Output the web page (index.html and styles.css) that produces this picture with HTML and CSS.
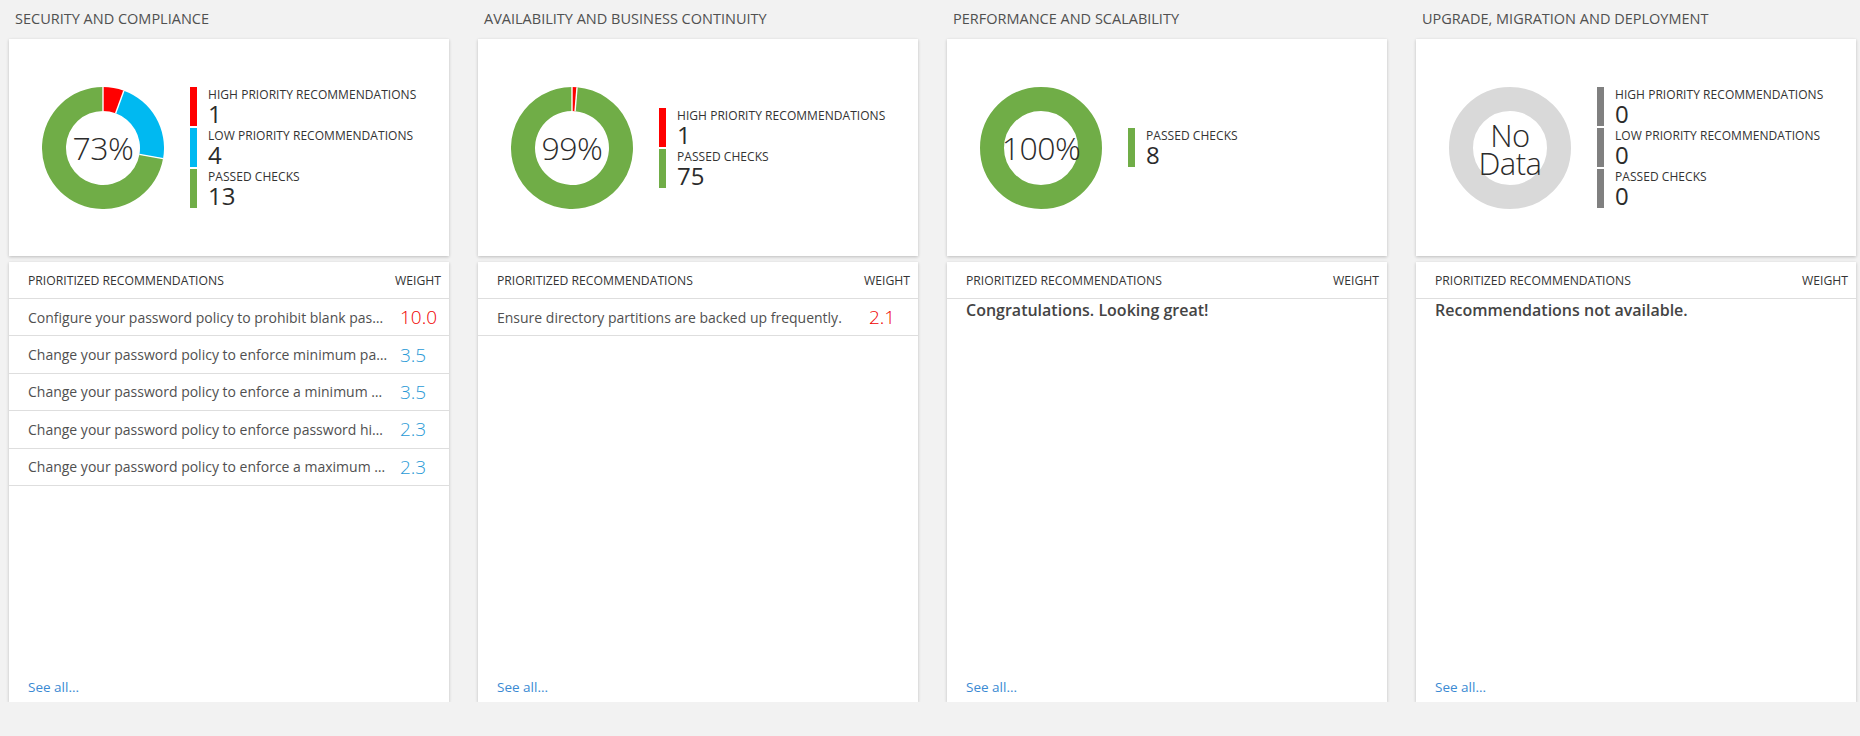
FILE: index.html
```html
<!DOCTYPE html>
<html lang="en">
<head>
<meta charset="utf-8">
<title>Assessment</title>
<link rel="stylesheet" href="styles.css">
</head>
<body>
<div class="board">

  <section class="col">
    <h2 class="col-title">SECURITY AND COMPLIANCE</h2>
    <div class="card summary">
      <div class="donut">
        <svg viewBox="0 0 122 122" width="122" height="122">
          <path class="seg-red" d="M61,0 A61,61 0 0 1 81.863,3.679 L73.655,26.231 A37,37 0 0 0 61,24 Z"/>
          <path class="seg-blue" d="M81.863,3.679 A61,61 0 0 1 121.073,71.593 L97.438,67.425 A37,37 0 0 0 73.655,26.231 Z"/>
          <path class="seg-green" d="M121.073,71.593 A61,61 0 1 1 61,0 L61,24 A37,37 0 1 0 97.438,67.425 Z"/>
          <line class="sep" x1="61" y1="0" x2="61" y2="24"/>
          <line class="sep" x1="81.863" y1="3.679" x2="73.655" y2="26.231"/>
          <line class="sep" x1="121.073" y1="71.593" x2="97.438" y2="67.425"/>
        </svg>
        <div class="donut-label">73%</div>
      </div>
      <ul class="legend">
        <li class="leg"><span class="bar red"></span><div class="leg-text"><div class="leg-label">HIGH PRIORITY RECOMMENDATIONS</div><div class="leg-num">1</div></div></li>
        <li class="leg"><span class="bar blue"></span><div class="leg-text"><div class="leg-label">LOW PRIORITY RECOMMENDATIONS</div><div class="leg-num">4</div></div></li>
        <li class="leg"><span class="bar green"></span><div class="leg-text"><div class="leg-label">PASSED CHECKS</div><div class="leg-num">13</div></div></li>
      </ul>
    </div>
    <div class="card recs">
      <div class="recs-head"><span class="h-name">PRIORITIZED RECOMMENDATIONS</span><span class="h-weight">WEIGHT</span></div>
      <ul class="rows">
        <li class="row"><span class="r-name">Configure your password policy to prohibit blank pas…</span><span class="r-weight hi">10.0</span></li>
        <li class="row"><span class="r-name">Change your password policy to enforce minimum pa…</span><span class="r-weight lo">3.5</span></li>
        <li class="row"><span class="r-name">Change your password policy to enforce a minimum …</span><span class="r-weight lo">3.5</span></li>
        <li class="row"><span class="r-name">Change your password policy to enforce password hi…</span><span class="r-weight lo">2.3</span></li>
        <li class="row"><span class="r-name">Change your password policy to enforce a maximum …</span><span class="r-weight lo">2.3</span></li>
      </ul>
      <a class="see-all" href="#">See all...</a>
    </div>
  </section>

  <section class="col">
    <h2 class="col-title">AVAILABILITY AND BUSINESS CONTINUITY</h2>
    <div class="card summary">
      <div class="donut">
        <svg viewBox="0 0 122 122" width="122" height="122">
          <path class="seg-red" d="M61,0 A61,61 0 0 1 66.037,0.209 L64.055,24.127 A37,37 0 0 0 61,24 Z"/>
          <path class="seg-green" d="M66.037,0.209 A61,61 0 1 1 61,0 L61,24 A37,37 0 1 0 64.055,24.127 Z"/>
          <line class="sep" x1="61" y1="0" x2="61" y2="24"/>
          <line class="sep" x1="66.037" y1="0.209" x2="64.055" y2="24.127"/>
        </svg>
        <div class="donut-label">99%</div>
      </div>
      <ul class="legend">
        <li class="leg"><span class="bar red"></span><div class="leg-text"><div class="leg-label">HIGH PRIORITY RECOMMENDATIONS</div><div class="leg-num">1</div></div></li>
        <li class="leg"><span class="bar green"></span><div class="leg-text"><div class="leg-label">PASSED CHECKS</div><div class="leg-num">75</div></div></li>
      </ul>
    </div>
    <div class="card recs">
      <div class="recs-head"><span class="h-name">PRIORITIZED RECOMMENDATIONS</span><span class="h-weight">WEIGHT</span></div>
      <ul class="rows">
        <li class="row"><span class="r-name">Ensure directory partitions are backed up frequently.</span><span class="r-weight hi">2.1</span></li>
      </ul>
      <a class="see-all" href="#">See all...</a>
    </div>
  </section>

  <section class="col">
    <h2 class="col-title">PERFORMANCE AND SCALABILITY</h2>
    <div class="card summary">
      <div class="donut">
        <svg viewBox="0 0 122 122" width="122" height="122">
          <circle class="ring-green" cx="61" cy="61" r="49"/>
        </svg>
        <div class="donut-label">100%</div>
      </div>
      <ul class="legend">
        <li class="leg"><span class="bar green"></span><div class="leg-text"><div class="leg-label">PASSED CHECKS</div><div class="leg-num">8</div></div></li>
      </ul>
    </div>
    <div class="card recs">
      <div class="recs-head"><span class="h-name">PRIORITIZED RECOMMENDATIONS</span><span class="h-weight">WEIGHT</span></div>
      <p class="recs-msg">Congratulations. Looking great!</p>
      <a class="see-all" href="#">See all...</a>
    </div>
  </section>

  <section class="col">
    <h2 class="col-title">UPGRADE, MIGRATION AND DEPLOYMENT</h2>
    <div class="card summary">
      <div class="donut">
        <svg viewBox="0 0 122 122" width="122" height="122">
          <circle class="ring-gray" cx="61" cy="61" r="49"/>
        </svg>
        <div class="donut-label two">No<br>Data</div>
      </div>
      <ul class="legend">
        <li class="leg"><span class="bar gray"></span><div class="leg-text"><div class="leg-label">HIGH PRIORITY RECOMMENDATIONS</div><div class="leg-num">0</div></div></li>
        <li class="leg"><span class="bar gray"></span><div class="leg-text"><div class="leg-label">LOW PRIORITY RECOMMENDATIONS</div><div class="leg-num">0</div></div></li>
        <li class="leg"><span class="bar gray"></span><div class="leg-text"><div class="leg-label">PASSED CHECKS</div><div class="leg-num">0</div></div></li>
      </ul>
    </div>
    <div class="card recs">
      <div class="recs-head"><span class="h-name">PRIORITIZED RECOMMENDATIONS</span><span class="h-weight">WEIGHT</span></div>
      <p class="recs-msg">Recommendations not available.</p>
      <a class="see-all" href="#">See all...</a>
    </div>
  </section>

</div>
</body>
</html>
```

FILE: styles.css
```css
* { box-sizing: border-box; }

html, body {
  margin: 0;
  padding: 0;
  background: #f2f2f2;
  font-family: "Open Sans", "Noto Sans", "Liberation Sans", sans-serif;
  color: #333;
}

.board {
  display: grid;
  grid-template-columns: repeat(4, 440px);
  column-gap: 29px;
  padding-left: 9px;
}

.col {
  display: flex;
  flex-direction: column;
}

.col-title {
  margin: 0;
  height: 39px;
  padding: 9px 0 0 6px;
  font-size: 14.5px;
  font-weight: 400;
  line-height: 20px;
  color: #505050;
  white-space: nowrap;
}

.card {
  background: #fff;
  box-shadow: 0 1px 3px rgba(0, 0, 0, 0.22);
}

/* summary card */
.summary {
  height: 217px;
  display: flex;
  align-items: center;
  padding-left: 33px;
}

.donut {
  position: relative;
  width: 122px;
  height: 122px;
  flex: none;
}

.donut svg { display: block; }

.seg-red { fill: #ff0000; }
.seg-blue { fill: #00b9f1; }
.seg-green { fill: #70ad47; }
.sep { stroke: #fff; stroke-width: 1.4; }
.ring-green { fill: none; stroke: #70ad47; stroke-width: 24; }
.ring-gray { fill: none; stroke: #d9d9d9; stroke-width: 24; }

.donut-label {
  position: absolute;
  inset: 0;
  display: flex;
  align-items: center;
  justify-content: center;
  text-align: center;
  font-size: 32px;
  font-weight: 300;
  line-height: 30px;
  color: #2b2b2b;
  letter-spacing: -0.5px;
}

.donut-label.two {
  font-size: 31px;
  line-height: 28px;
  padding-top: 3px;
}

.legend {
  list-style: none;
  margin: 0 0 0 26px;
  padding: 0;
  display: flex;
  flex-direction: column;
  gap: 2px;
}

.leg {
  display: flex;
  height: 39px;
}

.bar {
  width: 7px;
  flex: none;
}
.bar.red { background: #ff0000; }
.bar.blue { background: #00b9f1; }
.bar.green { background: #70ad47; }
.bar.gray { background: #808080; }

.leg-text {
  padding-left: 11px;
  display: flex;
  flex-direction: column;
}

.leg-label {
  font-size: 12px;
  line-height: 15px;
  letter-spacing: 0.05px;
  color: #333;
  white-space: nowrap;
}

.leg-num {
  font-size: 24px;
  line-height: 23px;
  color: #2b2b2b;
}

/* recommendations card */
.recs {
  margin-top: 6px;
  height: 440px;
  display: flex;
  flex-direction: column;
}

.recs-head {
  display: flex;
  justify-content: space-between;
  align-items: center;
  height: 37px;
  padding: 0 8px 0 19px;
  border-bottom: 1px solid #dedede;
  font-size: 12.2px;
  color: #333;
}

.rows {
  list-style: none;
  margin: 0;
  padding: 0;
}

.row {
  display: flex;
  align-items: center;
  height: 37.4px;
  border-bottom: 1px solid #dedede;
  padding-left: 19px;
}

.r-name {
  width: 372px;
  flex: none;
  font-size: 14px;
  color: #505050;
  white-space: nowrap;
  overflow: hidden;
  text-overflow: ellipsis;
}

.r-weight {
  font-size: 19px;
  font-weight: 300;
}
.r-weight.hi { color: #f00000; }
.r-weight.lo { color: #2a9ad6; }

.recs-msg {
  margin: 0;
  padding: 0 0 0 19px;
  font-size: 16px;
  font-weight: 600;
  line-height: 22px;
  color: #444;
}

.see-all {
  margin-top: auto;
  padding: 0 0 6px 19px;
  font-size: 13.5px;
  line-height: 18px;
  color: #3b8ad3;
  text-decoration: none;
}
```
